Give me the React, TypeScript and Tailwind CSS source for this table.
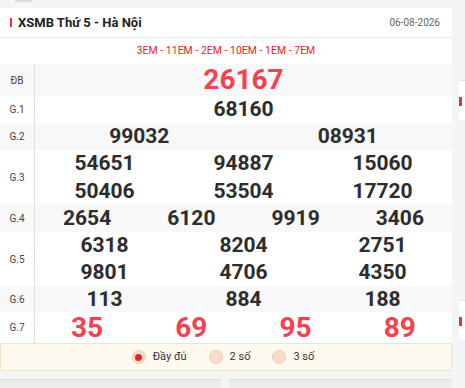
import React from "react";

const font = { fontFamily: "Roboto, 'Noto Sans', Arial, sans-serif" };

type Row = { label: string; cols: number; lines: string[][]; big?: boolean; red?: boolean; h: string; bg: boolean };

const rows: Row[] = [
  { label: "ĐB", cols: 1, lines: [["26167"]], big: true, red: true, h: "h-[32px]", bg: true },
  { label: "G.1", cols: 1, lines: [["68160"]], h: "h-[27px]", bg: false },
  { label: "G.2", cols: 2, lines: [["99032", "08931"]], h: "h-[27px]", bg: true },
  { label: "G.3", cols: 3, lines: [["54651", "94887", "15060"], ["50406", "53504", "17720"]], h: "h-[55px]", bg: false },
  { label: "G.4", cols: 4, lines: [["2654", "6120", "9919", "3406"]], h: "h-[27px]", bg: true },
  { label: "G.5", cols: 3, lines: [["6318", "8204", "2751"], ["9801", "4706", "4350"]], h: "h-[54px]", bg: false },
  { label: "G.6", cols: 3, lines: [["113", "884", "188"]], h: "h-[26px]", bg: true },
  { label: "G.7", cols: 4, lines: [["35", "69", "95", "89"]], big: true, red: true, h: "h-[31px]", bg: false },
];

const gridCols: Record<number, string> = {
  1: "grid-cols-1",
  2: "grid-cols-2",
  3: "grid-cols-3",
  4: "grid-cols-4",
};

function Radio({ on, label }: { on?: boolean; label: string }) {
  return (
    <div className="flex items-center gap-[7px]">
      <span className="w-[14px] h-[14px] rounded-full bg-[#f8dcc7] border border-[#efcdb3] flex items-center justify-center">
        {on ? <span className="w-[7px] h-[7px] rounded-full bg-[#f01e2c]" /> : null}
      </span>
      <span className="text-[11px] text-[#333]">{label}</span>
    </div>
  );
}

export default function App() {
  return (
    <div className="w-[465px] h-[388px] bg-[#f4f5f7] overflow-hidden flex" style={font}>
      <div className="w-[452px] shrink-0 flex flex-col">
        <div className="h-[8px]">
          <div className="ml-[15px] w-[17px] h-[2px] bg-[#dcdcdf]" />
        </div>
        <div className="bg-white">
          <div className="h-[30px] flex items-center justify-between pl-[10px] pr-[12px] border-b border-[#e6e6e8]">
            <div className="flex items-center gap-[6px]">
              <span className="w-[2px] h-[9px] bg-[#e8323c]" />
              <span className="text-[13px] font-bold text-[#222]">XSMB Thứ 5 - Hà Nội</span>
            </div>
            <span className="text-[10px] text-[#666]">06-08-2026</span>
          </div>
          <div className="h-[26px] flex items-center justify-center text-[10.5px] text-[#ee1c25]">
            3EM - 11EM - 2EM - 10EM - 1EM - 7EM
          </div>
          {rows.map((r) => (
            <div key={r.label} className={`flex ${r.h} ${r.bg ? "bg-[#f8f8f9]" : "bg-white"}`}>
              <div className="w-[35px] shrink-0 border-r border-[#dedede] flex items-center justify-center text-[10px] text-[#444]">
                {r.label}
              </div>
              <div className="flex-1 flex flex-col">
                {r.lines.map((line, i) => (
                  <div key={i} className={`flex-1 grid ${gridCols[r.cols]} items-center`}>
                    {line.map((n) => (
                      <span
                        key={n}
                        className={`text-center font-bold leading-none ${
                          r.big ? "text-[28px] text-[#f2434f]" : "text-[21px] text-[#2d2d2d]"
                        }`}
                      >
                        {n}
                      </span>
                    ))}
                  </div>
                ))}
              </div>
            </div>
          ))}
          <div className="h-[28px] bg-[#fffaf0] border border-[#f4e3c9] flex items-center justify-center gap-[22px] pr-[6px]">
            <Radio on label="Đầy đủ" />
            <Radio label="2 số" />
            <Radio label="3 số" />
          </div>
        </div>
        <div className="mt-[8px] flex gap-[8px] flex-1">
          <div className="w-[221px] bg-[#ececee] border-t border-[#dcdcde]" />
          <div className="flex-1 bg-[#ececee] border-t border-[#dcdcde]" />
        </div>
      </div>
      <div className="flex-1 pl-[7px] flex flex-col">
        <div className="mt-[80px] h-[40px] bg-white border-t border-[#e2e2e4] flex items-center">
          <span className="w-[3px] h-[9px] bg-[#e8323c] mt-[2px]" />
        </div>
        <div className="mt-[180px] h-[40px] bg-white border-t border-[#e2e2e4] flex items-start pt-[16px]">
          <span className="w-[3px] h-[9px] bg-[#e8323c]" />
        </div>
      </div>
    </div>
  );
}
